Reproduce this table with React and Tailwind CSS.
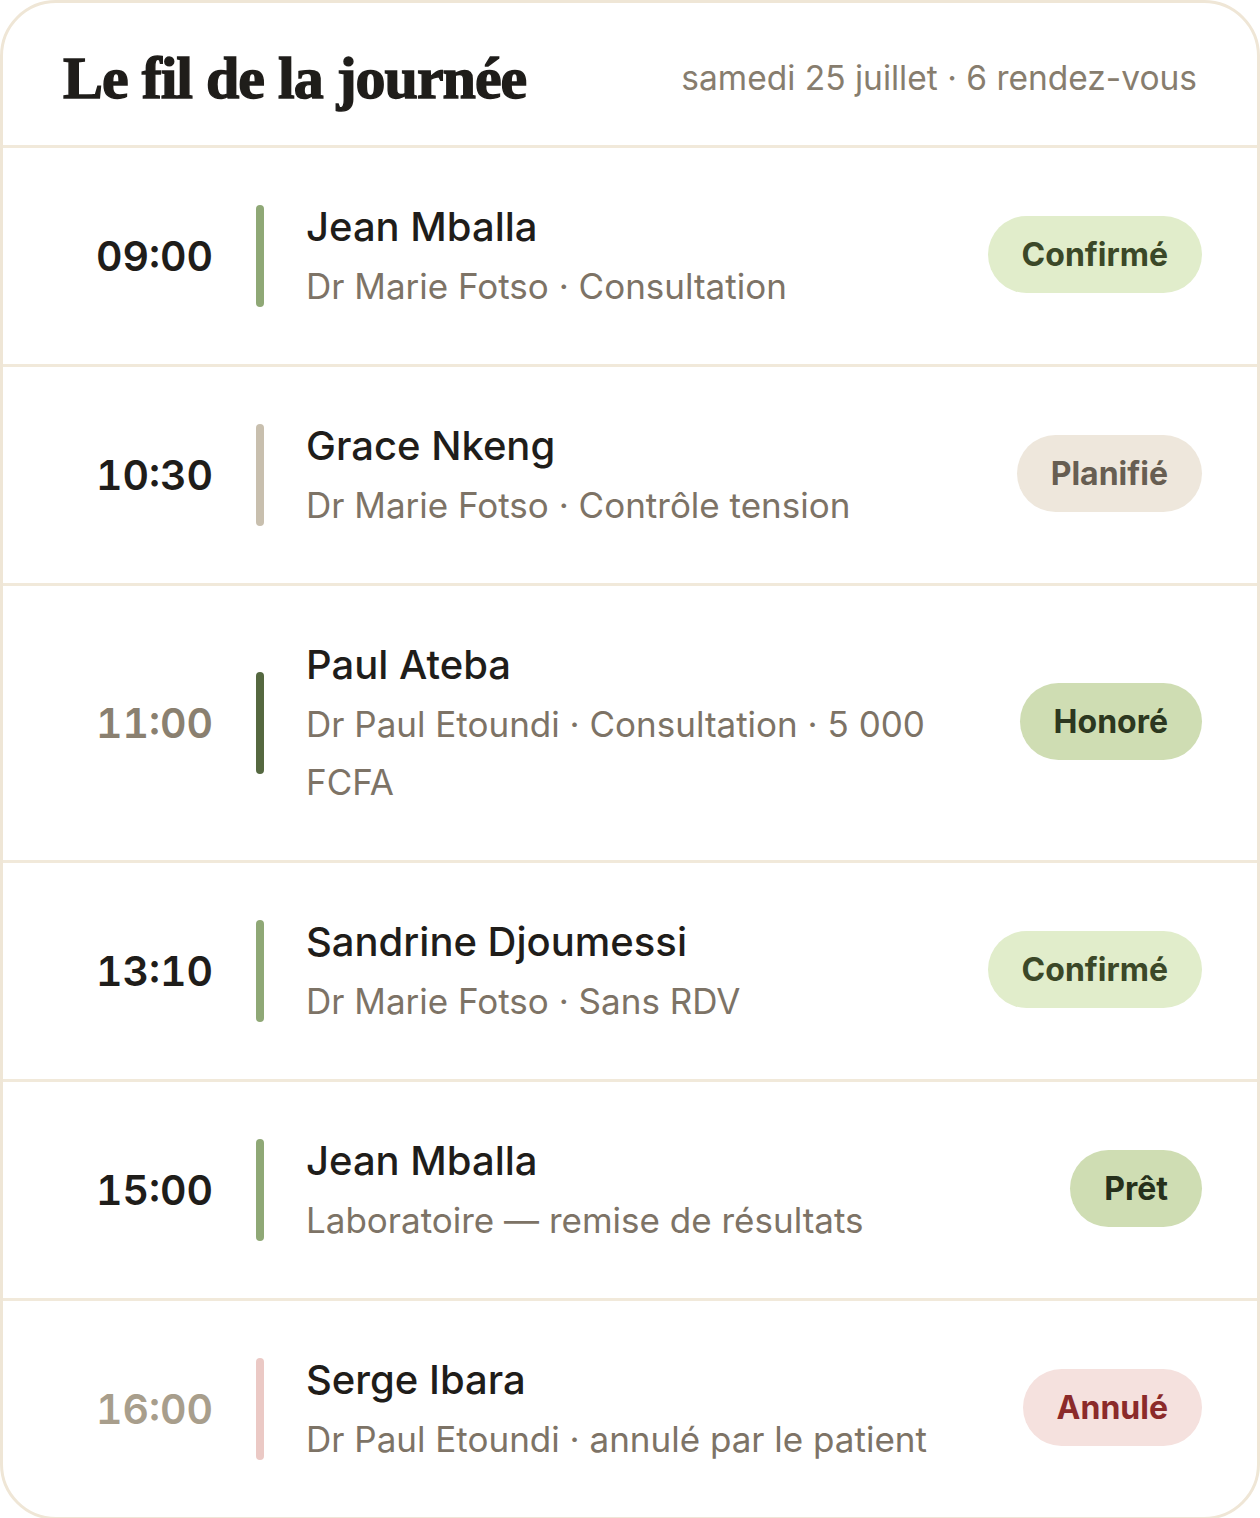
import React from "react";

const rows = [
  { time: "09:00", name: "Jean Mballa", sub: "Dr Marie Fotso · Consultation", status: "confirmed" },
  { time: "10:30", name: "Grace Nkeng", sub: "Dr Marie Fotso · Contrôle tension", status: "planned" },
  { time: "11:00", name: "Paul Ateba", sub: "Dr Paul Etoundi · Consultation · 5 000 FCFA", status: "honored" },
  { time: "13:10", name: "Sandrine Djoumessi", sub: "Dr Marie Fotso · Sans RDV", status: "confirmed" },
  { time: "15:00", name: "Jean Mballa", sub: "Laboratoire — remise de résultats", status: "ready" },
  { time: "16:00", name: "Serge Ibara", sub: "Dr Paul Etoundi · annulé par le patient", status: "cancelled" },
];

const styles = {
  confirmed: { label: "Confirmé", time: "text-[#1f1d1a]", bar: "bg-[#8fa876]", badge: "bg-[#e1edcb] text-[#3b4828]" },
  planned: { label: "Planifié", time: "text-[#1f1d1a]", bar: "bg-[#c8bfae]", badge: "bg-[#eee7dc] text-[#675e52]" },
  honored: { label: "Honoré", time: "text-[#8a8070]", bar: "bg-[#556840]", badge: "bg-[#cfddb3] text-[#2c3720]" },
  ready: { label: "Prêt", time: "text-[#1f1d1a]", bar: "bg-[#8fa876]", badge: "bg-[#cfddb3] text-[#26301b]" },
  cancelled: { label: "Annulé", time: "text-[#a89e8c]", bar: "bg-[#ebc9c5]", badge: "bg-[#f5e1de] text-[#8b2a2a]" },
};

const Row = ({ item }) => {
  const s = styles[item.status];
  return (
    <div className="flex items-center border-t-[3px] border-[#f1e9da] pl-[60px] pr-[55px] py-[49px]">
      <div className={`w-[150px] shrink-0 text-right text-[41px] font-semibold leading-none tabular-nums ${s.time}`}>
        {item.time}
      </div>
      <div className={`ml-[43px] h-[102px] w-2 shrink-0 rounded-full ${s.bar}`} />
      <div className="ml-[42px] min-w-0 flex-1 pr-[48px]">
        <div className="text-[40px] font-medium leading-[60px] text-[#1f1d1a]">{item.name}</div>
        <div className="text-[35px] leading-[58px] text-[#7d7366]">{item.sub}</div>
      </div>
      <div className={`-mt-[3px] flex h-[77px] shrink-0 items-center rounded-full px-[34px] text-[32px] font-bold ${s.badge}`}>
        {s.label}
      </div>
    </div>
  );
};

const App = () => {
  return (
    <div className="min-h-[1518px] w-[1260px] bg-white" style={{ fontFamily: "Inter, 'Noto Sans', sans-serif" }}>
      <div className="overflow-hidden rounded-[56px] border-[3px] border-[#efe6d6] bg-white">
        <div className="flex h-[142px] items-center justify-between px-[60px] pt-[8px]">
          <h1
            className="text-[60px] font-bold tracking-[-1px] text-[#1f1d1a] [-webkit-text-stroke:1.4px_#1f1d1a]"
            style={{ fontFamily: "'Liberation Serif', 'DejaVu Serif', serif" }}
          >
            Le fil de la journée
          </h1>
          <div className="text-[33.5px] text-[#877d6e]">samedi 25 juillet · 6 rendez-vous</div>
        </div>
        {rows.map((item, i) => (
          <Row key={i} item={item} />
        ))}
      </div>
    </div>
  );
};

export default App;
